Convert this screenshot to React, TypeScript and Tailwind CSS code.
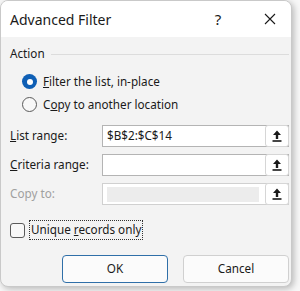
import React from "react";

const font = { fontFamily: '"Segoe UI", "Noto Sans", "Open Sans", sans-serif' };

function UpIcon() {
  return (
    <svg width="10" height="12" viewBox="0 0 10 12" fill="none">
      <path d="M5 0.5 L9 5 H6.2 V9 H3.8 V5 H1 Z" fill="#1a1a1a" />
      <rect x="0.5" y="10.2" width="9" height="1.6" fill="#1a1a1a" />
    </svg>
  );
}

function RangeRow({
  label,
  value,
  disabled,
}: {
  label: React.ReactNode;
  value?: string;
  disabled?: boolean;
}) {
  return (
    <div className="flex items-center h-[22px]">
      <div className={`w-[92px] text-[11.7px] ${disabled ? "text-[#a0a0a0]" : "text-[#1a1a1a]"}`}>{label}</div>
      <div
        className={`flex-1 h-[22px] flex items-stretch border ${
          disabled ? "border-[#d0d0d0] bg-white" : "border-[#b4b4b4] bg-white"
        }`}
      >
        <div className="flex-1 flex items-center pl-[4px] text-[11.7px] text-[#1a1a1a]">
          {disabled ? <div className="w-full h-[15px] mr-[6px] bg-[#ececec]" /> : value}
        </div>
        <div className="w-[24px] flex items-center justify-center bg-white border border-[#d6d6d6] rounded-[3px] -my-px -mr-px">
          <UpIcon />
        </div>
      </div>
    </div>
  );
}

export default function App() {
  return (
    <div className="w-[300px] h-[291px] bg-[#f7f7f7] overflow-hidden" style={font}>
      <div className="w-[292px] h-[287px] rounded-[8px] border border-[#c9c9c9] bg-[#f3f3f3] overflow-hidden shadow-[2px_2px_6px_rgba(0,0,0,0.25)] flex flex-col">
        <div className="h-[36px] bg-white flex items-center pl-[9px] shrink-0">
          <div className="text-[14px] text-[#1a1a1a] flex-1">Advanced Filter</div>
          <div className="w-[20px] text-center text-[15px] text-[#1a1a1a] mr-[36px]">?</div>
          <svg width="12" height="12" viewBox="0 0 12 12" className="mr-[15px]">
            <path d="M1 1 L11 11 M11 1 L1 11" stroke="#1a1a1a" strokeWidth="1.1" />
          </svg>
        </div>
        <div className="flex-1 flex flex-col pl-[9px] pr-[2px]">
          <div className="flex items-center h-[18px] mt-[8px]">
            <span className="text-[11.7px] text-[#1a1a1a]">Action</span>
            <div className="flex-1 h-px bg-[#dcdcdc] ml-[6px]" />
          </div>
          <div className="flex flex-col mt-[7px] pl-[12px]">
            <div className="flex items-center h-[23px]">
              <div className="w-[15px] h-[15px] rounded-full bg-[#0f5fb5] flex items-center justify-center">
                <div className="w-[6px] h-[6px] rounded-full bg-white" />
              </div>
              <span className="ml-[6px] text-[11.7px] text-[#1a1a1a]">
                <u>F</u>ilter the list, in-place
              </span>
            </div>
            <div className="flex items-center h-[23px]">
              <div className="w-[15px] h-[15px] rounded-full border border-[#5a5a5a] bg-[#f8f8f8]" />
              <span className="ml-[6px] text-[11.7px] text-[#1a1a1a]">
                C<u>o</u>py to another location
              </span>
            </div>
          </div>
          <div className="flex flex-col gap-[7px] mt-[9px]">
            <RangeRow label={<><u>L</u>ist range:</>} value="$B$2:$C$14" />
            <RangeRow label={<><u>C</u>riteria range:</>} />
            <RangeRow label="Copy to:" disabled />
          </div>
          <div className="flex items-center mt-[16px] h-[18px]">
            <div className="w-[15px] h-[15px] rounded-[3px] border border-[#5a5a5a] bg-[#f8f8f8]" />
            <span className="ml-[4px] px-[1px] text-[11.7px] text-[#1a1a1a] border border-dotted border-[#333]">
              Unique <u>r</u>ecords only
            </span>
          </div>
          <div className="flex justify-end gap-[15px] mt-[16px] pr-[0px]">
            <button className="w-[106px] h-[28px] rounded-[4px] border-[1.5px] border-[#2f6fa8] bg-[#fbfbfb] text-[11.7px] text-[#1a1a1a]">
              OK
            </button>
            <button className="w-[106px] h-[28px] rounded-[4px] border border-[#d0d0d0] bg-[#fbfbfb] text-[11.7px] text-[#1a1a1a]">
              Cancel
            </button>
          </div>
        </div>
      </div>
    </div>
  );
}
